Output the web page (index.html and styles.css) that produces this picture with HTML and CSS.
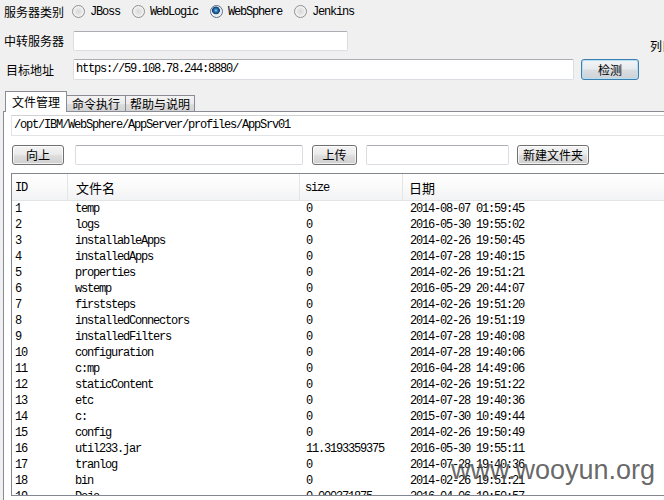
FILE: index.html
```html
<!DOCTYPE html>
<html>
<head>
<meta charset="utf-8">
<link rel="stylesheet" href="styles.css">
</head>
<body>
<div class="app">
  <div class="row row1">
    <div class="lbl">服务器类别</div>
    <div class="radios">
      <div class="radio"><span class="dot"></span><span class="mono">JBoss</span></div>
      <div class="radio"><span class="dot"></span><span class="mono">WebLogic</span></div>
      <div class="radio"><span class="dot on"></span><span class="mono">WebSphere</span></div>
      <div class="radio"><span class="dot"></span><span class="mono">Jenkins</span></div>
    </div>
  </div>
  <div class="row row2">
    <div class="lbl">中转服务器</div>
    <div class="input in-relay"></div>
    <div class="side-lbl">列目录</div>
  </div>
  <div class="row row3">
    <div class="lbl lbl-indent">目标地址</div>
    <div class="input in-url mono">https://59.108.78.244:8880/</div>
    <div class="btn btn-focus btn-check">检测</div>
  </div>
  <div class="tabs">
    <div class="tab tab-active">文件管理</div>
    <div class="tab tab-2">命令执行</div>
    <div class="tab tab-3">帮助与说明</div>
  </div>
  <div class="panel">
    <div class="path mono">/opt/IBM/WebSphere/AppServer/profiles/AppSrv01</div>
    <div class="toolbar">
      <div class="btn btn-up">向上</div>
      <div class="input in-a"></div>
      <div class="btn btn-upload">上传</div>
      <div class="input in-b"></div>
      <div class="btn btn-new">新建文件夹</div>
    </div>
    <div class="table">
      <div class="thead">
        <div class="th c1 mono">ID</div>
        <div class="th c2">文件名</div>
        <div class="th c3 mono">size</div>
        <div class="th c4">日期</div>
      </div>
      <div class="tbody mono">
        <div class="tr"><span class="c1">1</span><span class="c2">temp</span><span class="c3">0</span><span class="c4">2014-08-07 01:59:45</span></div>
        <div class="tr"><span class="c1">2</span><span class="c2">logs</span><span class="c3">0</span><span class="c4">2016-05-30 19:55:02</span></div>
        <div class="tr"><span class="c1">3</span><span class="c2">installableApps</span><span class="c3">0</span><span class="c4">2014-02-26 19:50:45</span></div>
        <div class="tr"><span class="c1">4</span><span class="c2">installedApps</span><span class="c3">0</span><span class="c4">2014-07-28 19:40:15</span></div>
        <div class="tr"><span class="c1">5</span><span class="c2">properties</span><span class="c3">0</span><span class="c4">2014-02-26 19:51:21</span></div>
        <div class="tr"><span class="c1">6</span><span class="c2">wstemp</span><span class="c3">0</span><span class="c4">2016-05-29 20:44:07</span></div>
        <div class="tr"><span class="c1">7</span><span class="c2">firststeps</span><span class="c3">0</span><span class="c4">2014-02-26 19:51:20</span></div>
        <div class="tr"><span class="c1">8</span><span class="c2">installedConnectors</span><span class="c3">0</span><span class="c4">2014-02-26 19:51:19</span></div>
        <div class="tr"><span class="c1">9</span><span class="c2">installedFilters</span><span class="c3">0</span><span class="c4">2014-07-28 19:40:08</span></div>
        <div class="tr"><span class="c1">10</span><span class="c2">configuration</span><span class="c3">0</span><span class="c4">2014-07-28 19:40:06</span></div>
        <div class="tr"><span class="c1">11</span><span class="c2">c:mp</span><span class="c3">0</span><span class="c4">2016-04-28 14:49:06</span></div>
        <div class="tr"><span class="c1">12</span><span class="c2">staticContent</span><span class="c3">0</span><span class="c4">2014-02-26 19:51:22</span></div>
        <div class="tr"><span class="c1">13</span><span class="c2">etc</span><span class="c3">0</span><span class="c4">2014-07-28 19:40:36</span></div>
        <div class="tr"><span class="c1">14</span><span class="c2">c:</span><span class="c3">0</span><span class="c4">2015-07-30 10:49:44</span></div>
        <div class="tr"><span class="c1">15</span><span class="c2">config</span><span class="c3">0</span><span class="c4">2014-02-26 19:50:49</span></div>
        <div class="tr"><span class="c1">16</span><span class="c2">util233.jar</span><span class="c3">11.3193359375</span><span class="c4">2016-05-30 19:55:11</span></div>
        <div class="tr"><span class="c1">17</span><span class="c2">tranlog</span><span class="c3">0</span><span class="c4">2014-07-28 19:40:36</span></div>
        <div class="tr"><span class="c1">18</span><span class="c2">bin</span><span class="c3">0</span><span class="c4">2014-02-26 19:51:21</span></div>
        <div class="tr"><span class="c1">19</span><span class="c2">Dojo</span><span class="c3">0.000371875</span><span class="c4">2016-04-06 19:50:57</span></div>
      </div>
    </div>
  </div>
  <div class="watermark">www.wooyun.org</div>
</div>
</body>
</html>
```

FILE: styles.css
```css
* { box-sizing: border-box; }
html, body { margin: 0; padding: 0; }
body {
  width: 664px;
  height: 500px;
  overflow: hidden;
  background: #f0f0f0;
  font-family: "Noto Sans CJK SC", "Noto Sans", sans-serif;
  font-size: 12px;
  color: #000;
}
.mono {
  font-family: "Liberation Mono", monospace;
  font-size: 12px;
  letter-spacing: -1.2px;
}
.app {
  position: relative;
  width: 664px;
  height: 500px;
  padding-left: 4px;
}
.row { display: flex; align-items: center; white-space: nowrap; }
.row1 { height: 23px; }
.row2 { height: 20px; margin-top: 8px; }
.row3 { height: 21px; margin-top: 8px; }
.lbl { width: 69px; flex-shrink: 0; line-height: 16px; }
.lbl-indent { padding-left: 2px; }

.radios { display: flex; align-items: center; margin-left: -1px; }
.radio { display: flex; align-items: center; margin-right: 12px; }
.dot {
  width: 13px;
  height: 13px;
  border-radius: 50%;
  border: 1px solid #8e8f8f;
  background: radial-gradient(circle at 50% 50%, #d8d8d8 0, #e6e6e6 40%, #f7f7f7 75%, #ffffff 100%);
  margin-right: 5px;
  flex-shrink: 0;
}
.dot.on {
  border-color: #5a6f84;
  background:
    radial-gradient(circle at 45% 40%, #8fd0f7 0, #2b78b8 1.6px, #0e3e72 3.6px, rgba(14,62,114,0) 4.2px),
    radial-gradient(circle at 50% 50%, #d8d8d8 0, #e6e6e6 40%, #f7f7f7 75%, #ffffff 100%);
}

.input {
  height: 20px;
  background: #fff;
  border: 1px solid #dadde2;
  border-top-color: #abadb3;
  border-radius: 2px;
  flex-shrink: 0;
}
.in-relay { width: 275px; }
.side-lbl {
  align-self: flex-end;
  margin-left: 302px;
  margin-bottom: -2px;
  line-height: 14px;
  flex-shrink: 0;
}
.in-url {
  width: 501px;
  height: 21px;
  line-height: 19px;
  padding-left: 2px;
}

.btn {
  height: 20px;
  border: 1px solid #707070;
  border-radius: 3px;
  background: linear-gradient(#f4f4f4 0%, #ebebeb 45%, #dddddd 55%, #cfcfcf 100%);
  box-shadow: inset 0 0 0 1px rgba(255,255,255,0.7);
  display: flex;
  align-items: center;
  justify-content: center;
  line-height: 16px;
  flex-shrink: 0;
}
.btn-focus {
  border-color: #3c7fb1;
  box-shadow: inset 0 0 0 1px #b6dff4;
  background: linear-gradient(#f2f4f6 0%, #e8ebee 45%, #d9dde1 55%, #cdd2d7 100%);
}
.btn-check { width: 58px; height: 21px; margin-left: 7px; }

.tabs {
  display: flex;
  align-items: flex-end;
  height: 20px;
  margin-top: 11px;
  padding-left: 1px;
  position: relative;
  z-index: 2;
}
.tab {
  border: 1px solid #898c95;
  border-bottom: none;
  display: flex;
  align-items: center;
  justify-content: center;
  line-height: 15px;
}
.tab-active {
  width: 62px;
  height: 21px;
  margin-bottom: -1px;
  background: #fff;
  padding-bottom: 1px;
}
.tab-2, .tab-3 {
  height: 16px;
  border-left: none;
  background: linear-gradient(#f3f3f3 0%, #ebebeb 50%, #dedede 51%, #d3d3d3 100%);
}
.tab-2 { width: 59px; }
.tab-3 { width: 69px; }

.panel {
  margin-left: -1px;
  width: 720px;
  height: 400px;
  border-top: 1px solid #898c95;
  border-left: 1px solid #898c95;
  background: #fff;
  padding-left: 7px;
  position: relative;
  z-index: 1;
}
.path {
  margin-top: 3px;
  height: 21px;
  line-height: 19px;
  border: 1px solid #e2e3e6;
  border-top-color: #d0d2d6;
  padding-left: 2px;
  background: #fff;
  white-space: nowrap;
}
.toolbar {
  display: flex;
  align-items: center;
  height: 21px;
  margin-top: 8px;
}
.btn-up { width: 52px; margin-left: 1px; }
.in-a { width: 228px; margin-left: 11px; }
.btn-upload { width: 45px; margin-left: 9px; }
.in-b { width: 143px; margin-left: 9px; }
.btn-new { width: 72px; margin-left: 8px; }

.table {
  margin-top: 8px;
  height: 323px;
  border: 1px solid #828790;
  border-right: none;
  overflow: hidden;
  background: #fff;
}
.thead {
  display: grid;
  grid-template-columns: 56px 232px 103px 1fr;
  height: 27px;
  border-bottom: 1px solid #e3e4e6;
  background: linear-gradient(#ffffff 0%, #fbfbfb 40%, #f2f3f5 100%);
}
.th {
  display: flex;
  align-items: center;
  border-right: 1px solid #e5e5e5;
  line-height: 16px;
  padding-top: 1px;
}
.th.c1 { padding-left: 3px; }
.th.c2 { padding-left: 8px; font-size: 13px; }
.th.c3 { padding-left: 5px; }
.th.c4 { padding-left: 6px; font-size: 13px; border-right: none; }
.tr {
  display: grid;
  grid-template-columns: 56px 232px 103px 1fr;
  height: 16px;
  line-height: 16px;
  white-space: nowrap;
}
.tr .c1 { padding-left: 3px; }
.tr .c2 { padding-left: 7px; }
.tr .c3 { padding-left: 6px; }
.tr .c4 { padding-left: 7px; }

.watermark {
  position: absolute;
  left: 451px;
  top: 457px;
  font-family: "Liberation Sans", Arial, sans-serif;
  font-size: 27px;
  line-height: 27px;
  color: rgba(85, 85, 85, 0.9);
  white-space: nowrap;
  z-index: 3;
}
```
